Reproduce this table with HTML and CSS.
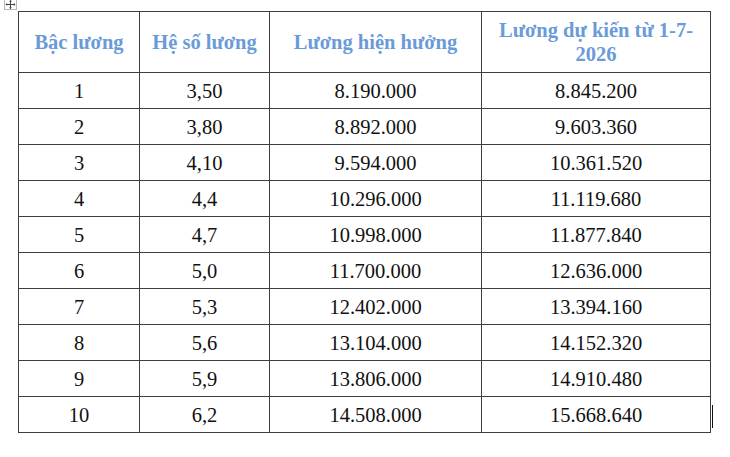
FILE: index.html
```html
<!DOCTYPE html>
<html lang="vi">
<head>
<meta charset="utf-8">
<title>Bảng lương</title>
<link rel="stylesheet" href="styles.css">
</head>
<body>
<div class="page">
  <div class="table-wrap">
    <span class="move-handle">
      <svg width="11" height="9" viewBox="0 0 11 9">
        <path d="M5.5 0.5 V8.5 M1 4.5 H10" stroke="#444" stroke-width="1" fill="none"/>
        <path d="M5.5 0 L4 1.6 H7 Z M5.5 9 L4 7.4 H7 Z M0.5 4.5 L2.1 3 V6 Z M10.5 4.5 L8.9 3 V6 Z" fill="#444"/>
      </svg>
    </span>
    <table class="salary">
      <colgroup>
        <col class="c1"><col class="c2"><col class="c3"><col class="c4">
      </colgroup>
      <thead>
        <tr>
          <th>Bậc lương</th>
          <th>Hệ số lương</th>
          <th>Lương hiện hưởng</th>
          <th>Lương dự kiến từ 1-7-2026</th>
        </tr>
      </thead>
      <tbody>
        <tr><td>1</td><td>3,50</td><td>8.190.000</td><td>8.845.200</td></tr>
        <tr><td>2</td><td>3,80</td><td>8.892.000</td><td>9.603.360</td></tr>
        <tr><td>3</td><td>4,10</td><td>9.594.000</td><td>10.361.520</td></tr>
        <tr><td>4</td><td>4,4</td><td>10.296.000</td><td>11.119.680</td></tr>
        <tr><td>5</td><td>4,7</td><td>10.998.000</td><td>11.877.840</td></tr>
        <tr><td>6</td><td>5,0</td><td>11.700.000</td><td>12.636.000</td></tr>
        <tr><td>7</td><td>5,3</td><td>12.402.000</td><td>13.394.160</td></tr>
        <tr><td>8</td><td>5,6</td><td>13.104.000</td><td>14.152.320</td></tr>
        <tr><td>9</td><td>5,9</td><td>13.806.000</td><td>14.910.480</td></tr>
        <tr><td>10</td><td>6,2</td><td>14.508.000</td><td>15.668.640</td></tr>
      </tbody>
    </table>
    <span class="text-cursor"></span>
    <span class="resize-handle"></span>
  </div>
</div>
</body>
</html>
```
FILE: styles.css
```css
html, body {
  margin: 0;
  padding: 0;
  background: #ffffff;
}

.page {
  padding: 11px 0 0 18px;
  font-family: "Liberation Serif", "Times New Roman", serif;
  color: #111111;
}

.table-wrap {
  position: relative;
  width: 692px;
}

.salary {
  border-collapse: collapse;
  table-layout: fixed;
  width: 692px;
  font-size: 20.5px;
}

.c1 { width: 121px; }
.c2 { width: 130px; }
.c3 { width: 212px; }
.c4 { width: 229px; }

.salary th,
.salary td {
  border: 1px solid #3e3e3e;
  text-align: center;
  vertical-align: middle;
  padding: 0 6px;
}

.salary th {
  height: 60px;
  font-weight: bold;
  color: #6a9bd8;
  line-height: 24px;
}

.salary td {
  height: 35px;
  line-height: 24px;
}

.move-handle {
  position: absolute;
  left: -14px;
  top: -12px;
  width: 11px;
  height: 9px;
  border: 1px solid #b8b8b8;
  background: #ffffff;
  display: flex;
  align-items: center;
  justify-content: center;
}

.text-cursor {
  position: absolute;
  right: -3px;
  bottom: 5px;
  width: 1px;
  height: 23px;
  background: #111111;
}

.resize-handle {
  position: absolute;
  right: -7px;
  bottom: -7px;
  width: 5px;
  height: 5px;
  border: 1px solid #a0a0a0;
  background: #ffffff;
}
```
